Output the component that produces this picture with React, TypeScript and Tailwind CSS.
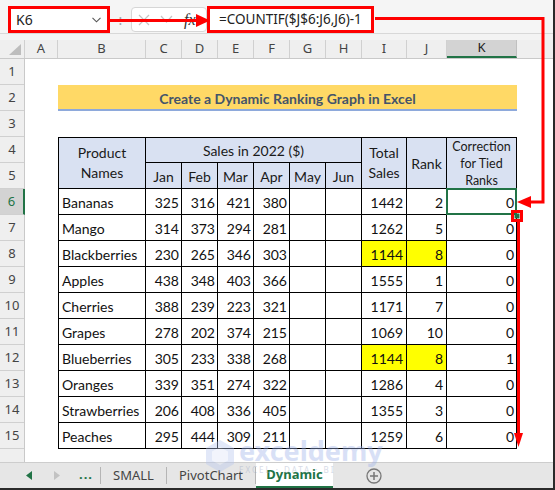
import React from "react";

type Row = { n: string; m: number[]; t: number; r: number; c: number; hl?: boolean };

const rows: Row[] = [
  { n: "Bananas", m: [325, 316, 421, 380], t: 1442, r: 2, c: 0 },
  { n: "Mango", m: [314, 373, 294, 281], t: 1262, r: 5, c: 0 },
  { n: "Blackberries", m: [230, 265, 346, 303], t: 1144, r: 8, c: 0, hl: true },
  { n: "Apples", m: [438, 348, 403, 366], t: 1555, r: 1, c: 0 },
  { n: "Cherries", m: [388, 239, 223, 321], t: 1171, r: 7, c: 0 },
  { n: "Grapes", m: [278, 202, 374, 215], t: 1069, r: 10, c: 0 },
  { n: "Blueberries", m: [305, 233, 338, 268], t: 1144, r: 8, c: 1, hl: true },
  { n: "Oranges", m: [339, 351, 274, 322], t: 1286, r: 4, c: 0 },
  { n: "Strawberries", m: [206, 408, 336, 405], t: 1355, r: 3, c: 0 },
  { n: "Peaches", m: [295, 444, 309, 211], t: 1259, r: 6, c: 0 },
];

const colHeads = [
  { l: "A", c: "w-[33px]" },
  { l: "B", c: "w-[88px]" },
  { l: "C", c: "w-[36px]" },
  { l: "D", c: "w-[36px]" },
  { l: "E", c: "w-[36px]" },
  { l: "F", c: "w-[36px]" },
  { l: "G", c: "w-[36px]" },
  { l: "H", c: "w-[36px]" },
  { l: "I", c: "w-[45px]" },
  { l: "J", c: "w-[40px]" },
];

const rowNums = Array.from({ length: 15 }, (_, i) => i + 1);

function DataRow({ row, first }: { row: Row; first: boolean }) {
  const num = "w-[36px] border-r border-b border-black flex items-center justify-end pr-[2px] pt-[2px]";
  return (
    <div className="flex h-[26px] text-[14px]">
      <div className="w-[33px]" />
      <div className="w-[88px] border-l border-r border-b border-black flex items-center pl-[3px] pt-[2px]">{row.n}</div>
      {row.m.map((v, i) => (
        <div key={i} className={num}>
          {v}
        </div>
      ))}
      <div className={num} />
      <div className={num} />
      <div
        className={
          row.hl
            ? "w-[45px] border-r border-b border-black flex items-center justify-end pr-[3px] pt-[2px] bg-[#ffff00]"
            : "w-[45px] border-r border-b border-black flex items-center justify-end pr-[3px] pt-[2px]"
        }
      >
        {row.t}
      </div>
      <div
        className={
          row.hl
            ? "w-[40px] border-r border-b border-black flex items-center justify-end pr-[3px] pt-[2px] bg-[#ffff00]"
            : "w-[40px] border-r border-b border-black flex items-center justify-end pr-[3px] pt-[2px]"
        }
      >
        {row.r}
      </div>
      <div className="relative w-[70px] border-r border-b border-black flex items-center justify-end pr-[2px] pt-[2px]">
        {row.c}
        {first && <div className="absolute inset-[-1px] border-2 border-[#217346]" />}
      </div>
    </div>
  );
}

export default function App() {
  return (
    <div className="relative w-[555px] h-[490px] overflow-hidden bg-white border-r-2 border-b-2 border-[#2a2a2a] font-['Lato',sans-serif] text-[#111]">
      {/* formula bar */}
      <div className="h-[34px] bg-[#f5f5f5] border-b border-[#d8d8d8] flex items-start pt-[6px] pl-[8px] font-['Noto_Sans',sans-serif]">
        <div className="w-[102px] h-[27px] border-[3px] border-[#ff0000] bg-white flex items-center justify-between pl-[5px] pr-[6px] text-[14px] text-[#222]">
          <span>K6</span>
          <svg width="9" height="6" viewBox="0 0 9 6">
            <path d="M0.5 0.8 L4.5 4.8 L8.5 0.8" fill="none" stroke="#555" strokeWidth="1.1" />
          </svg>
        </div>
        <div className="w-[21px] h-[27px] flex items-center justify-center text-[#a0a0a0] text-[14px]">:</div>
        <div className="w-[76px] h-[25px] mt-[1px] rounded-[4px] border border-[#d6d6d6] bg-white flex items-center">
          <svg className="ml-[6px]" width="12" height="12" viewBox="0 0 12 12">
            <path d="M1 1 L11 11 M11 1 L1 11" stroke="#c4c4c4" strokeWidth="1.2" />
          </svg>
          <svg className="ml-[10px]" width="13" height="10" viewBox="0 0 13 10">
            <path d="M1 1 L6.5 7 L12 1" fill="none" stroke="#c4c4c4" strokeWidth="1.2" />
          </svg>
          <span className="ml-[11px] font-['Liberation_Serif',serif] italic text-[16px] text-[#333]">fx</span>
        </div>
        <div className="w-[167px] h-[27px] border-[3px] border-[#ff0000] bg-white flex items-center pl-[9px] text-[13.5px] text-[#222]">
          =COUNTIF($J$6:J6,J6)-1
        </div>
      </div>
      <div className="h-[6px] bg-[#f3f3f3]" />
      {/* column headers */}
      <div className="h-[19px] flex bg-[#efefef] border-b border-[#c9c9c9] font-['Noto_Sans',sans-serif] text-[13px] text-[#444]">
        <div className="w-[25px] border-r border-[#d0d0d0] relative">
          <svg className="absolute right-[3px] bottom-[3px]" width="12" height="11" viewBox="0 0 12 11">
            <polygon points="12,0 12,11 0,11" fill="#bdbdbd" />
          </svg>
        </div>
        {colHeads.map((c) => (
          <div key={c.l} className={c.c + " border-r border-[#d0d0d0] flex items-center justify-center"}>
            {c.l}
          </div>
        ))}
        <div className="w-[70px] bg-[#d3d3d3] border-b-2 border-[#217346] flex items-center justify-center border-r border-r-[#c0c0c0] text-[#222]">
          K
        </div>
        <div className="flex-1" />
      </div>
      {/* body */}
      <div className="flex h-[403px]">
        <div className="w-[25px] flex flex-col bg-[#efefef] border-r border-[#c9c9c9] font-['Noto_Sans',sans-serif] text-[13px] text-[#444]">
          {rowNums.map((n) =>
            n === 6 ? (
              <div key={n} className="h-[26px] shrink-0 border-b border-[#d0d0d0] bg-[#d3d3d3] flex items-center justify-center text-[#217346] mr-[-1px] border-r-2 border-r-[#217346]">
                {n}
              </div>
            ) : (
              <div key={n} className="h-[26px] shrink-0 border-b border-[#d0d0d0] flex items-center justify-center">
                {n}
              </div>
            )
          )}
          <div className="flex-1" />
        </div>
        <div className="flex-1 flex flex-col">
          <div className="h-[26px]" />
          <div className="h-[26px] flex">
            <div className="w-[33px]" />
            <div className="w-[459px] bg-[#ffd966] border-b-2 border-[#8ea9db] flex items-center justify-center font-bold text-[14px] text-[#44546a] pt-[2px]">
              Create a Dynamic Ranking Graph in Excel
            </div>
          </div>
          <div className="h-[26px]" />
          {/* header block */}
          <div className="h-[52px] flex text-[14px] text-[#1a1a1a]">
            <div className="w-[33px]" />
            <div className="w-[88px] border border-black bg-[#d9e1f2] flex items-center justify-center text-center leading-[20px]">
              Product
              <br />
              Names
            </div>
            <div className="w-[216px] flex flex-col">
              <div className="h-[26px] border-t border-r border-b border-black bg-[#d9e1f2] flex items-center justify-center pt-[1px]">
                Sales in 2022 ($)
              </div>
              <div className="h-[26px] flex">
                {["Jan", "Feb", "Mar", "Apr", "May", "Jun"].map((m) => (
                  <div key={m} className="w-[36px] border-r border-b border-black bg-[#d9e1f2] flex items-center justify-center pt-[2px]">
                    {m}
                  </div>
                ))}
              </div>
            </div>
            <div className="w-[45px] border-t border-r border-b border-black bg-[#d9e1f2] flex items-center justify-center text-center leading-[20px]">
              Total
              <br />
              Sales
            </div>
            <div className="w-[40px] border-t border-r border-b border-black bg-[#d9e1f2] flex items-center justify-center">
              Rank
            </div>
            <div className="w-[70px] border-t border-r border-b border-black bg-[#d9e1f2] flex items-center justify-center text-center text-[12.5px] leading-[17px]">
              Correction
              <br />
              for Tied
              <br />
              Ranks
            </div>
          </div>
          {rows.map((r, i) => (
            <DataRow key={r.n} row={r} first={i === 0} />
          ))}
          <div className="flex-1" />
        </div>
      </div>
      {/* sheet tabs */}
      <div className="h-[26px] flex items-stretch bg-[#e6e6e6] border-t border-[#cdcdcd] font-['Noto_Sans',sans-serif] text-[13px] text-[#444]">
        <div className="w-[100px] flex items-center">
          <svg className="ml-[26px]" width="6" height="9" viewBox="0 0 6 9">
            <polygon points="6,0 6,9 0,4.5" fill="#217346" />
          </svg>
          <svg className="ml-[22px]" width="6" height="9" viewBox="0 0 6 9">
            <polygon points="0,0 0,9 6,4.5" fill="#c2c2c2" />
          </svg>
          <span className="ml-[19px] font-bold text-[#217346] tracking-[1px] pb-[2px]">...</span>
        </div>
        <div className="w-px bg-[#b5b5b5] my-[4px]" />
        <div className="w-[65px] flex items-center justify-center">SMALL</div>
        <div className="w-px bg-[#b5b5b5] my-[4px]" />
        <div className="w-[88px] flex items-center justify-center">PivotChart</div>
        <div className="w-px bg-[#b5b5b5] my-[4px]" />
        <div className="w-[77px] bg-white border-b-2 border-[#217346] flex items-center justify-center font-bold text-[#217346]">
          Dynamic
        </div>
        <div className="ml-[33px] flex items-center">
          <svg width="16" height="16" viewBox="0 0 16 16">
            <circle cx="8" cy="8" r="7" fill="none" stroke="#777" strokeWidth="1.3" />
            <path d="M8 4 V12 M4 8 H12" stroke="#777" strokeWidth="1.5" />
          </svg>
        </div>
      </div>

      {/* watermark */}
      <div className="absolute left-[205px] top-[437px] flex items-center opacity-40 pointer-events-none">
        <svg width="30" height="34" viewBox="0 0 30 34">
          <polygon points="15,1 29,9 29,25 15,33 1,25 1,9" fill="#b7c6ee" />
          <polygon points="15,8 23,12.5 23,21.5 15,26 7,21.5 7,12.5" fill="#dfe6f8" />
        </svg>
        <div className="ml-[4px] flex flex-col items-start leading-none">
          <span className="font-['Noto_Sans',sans-serif] font-bold text-[27px] text-[#9fb3ea]">exceldemy</span>
          <span className="mt-[2px] font-['Noto_Sans',sans-serif] text-[8px] tracking-[2px] text-[#9aa6c4]">EXCEL · DATA · BI</span>
        </div>
      </div>

      {/* red annotations */}
      <svg className="absolute left-0 top-0 pointer-events-none" width="555" height="490" viewBox="0 0 555 490">
        <path d="M110 20.5 H199" stroke="#ff0000" strokeWidth="3" fill="none" />
        <polygon points="196,14 210,20.5 196,27" fill="#ff0000" />
        <path d="M375 18.5 H543 V202 H529" stroke="#ff0000" strokeWidth="3" fill="none" />
        <polygon points="531,196 517,202 531,208" fill="#ff0000" />
        <rect x="512.5" y="211.5" width="9" height="9" fill="none" stroke="#ff0000" strokeWidth="3" />
        <rect x="514.5" y="213.5" width="5" height="5" fill="#217346" />
        <path d="M518.5 222 V436" stroke="#ff0000" strokeWidth="3" fill="none" />
        <polygon points="514,433 523,433 518.5,447" fill="#ff0000" />
      </svg>
    </div>
  );
}
